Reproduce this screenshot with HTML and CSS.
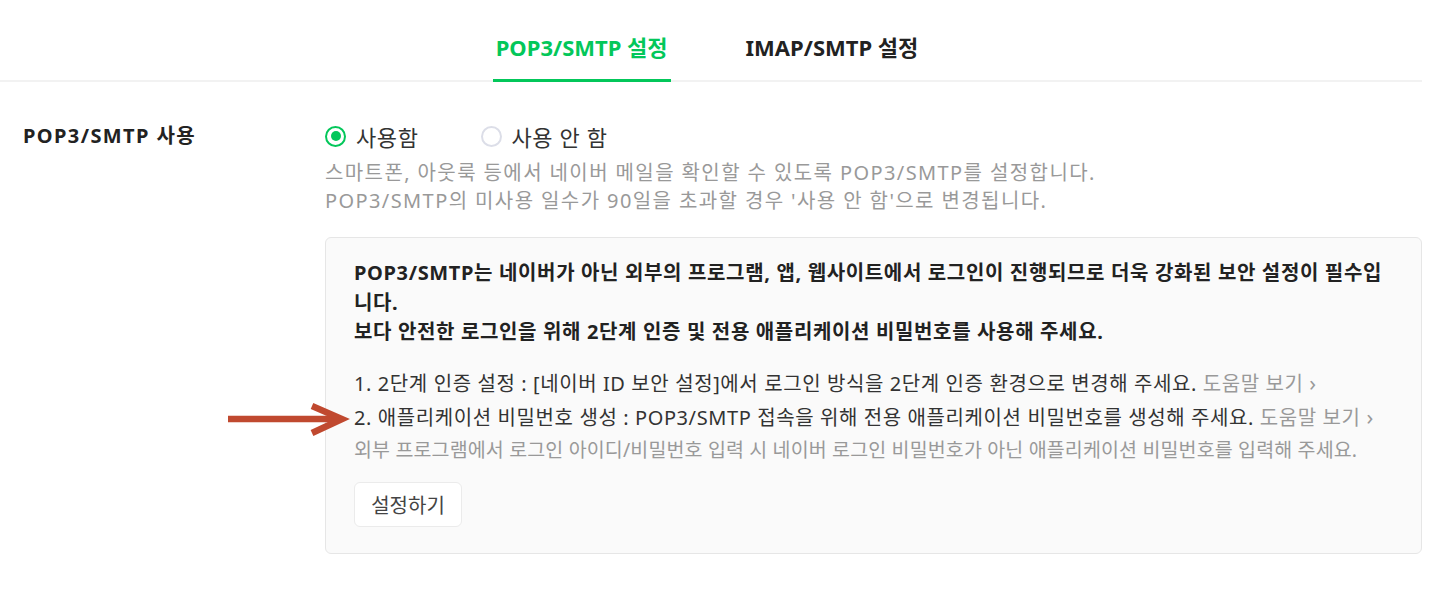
FILE: index.html
```html
<!DOCTYPE html>
<html lang="ko">
<head>
<meta charset="utf-8">
<title>POP3/SMTP 설정</title>
<link rel="stylesheet" href="styles.css">
</head>
<body>
<div class="page">
  <nav class="tabs">
    <a class="tab active">POP3/SMTP 설정</a>
    <a class="tab">IMAP/SMTP 설정</a>
  </nav>
  <section class="row">
    <div class="label">POP3/SMTP 사용</div>
    <div class="content">
      <div class="radios">
        <label class="radio checked"><span class="dot"></span>사용함</label>
        <label class="radio"><span class="dot"></span>사용 안 함</label>
      </div>
      <p class="desc">스마트폰, 아웃룩 등에서 네이버 메일을 확인할 수 있도록 POP3/SMTP를 설정합니다.<br>POP3/SMTP의 미사용 일수가 90일을 초과할 경우 '사용 안 함'으로 변경됩니다.</p>
      <div class="notice">
        <p class="notice-title">POP3/SMTP는 네이버가 아닌 외부의 프로그램, 앱, 웹사이트에서 로그인이 진행되므로 더욱 강화된 보안 설정이 필수입니다.<br>보다 안전한 로그인을 위해 2단계 인증 및 전용 애플리케이션 비밀번호를 사용해 주세요.</p>
        <ol class="steps">
          <li>1. 2단계 인증 설정 : [네이버 ID 보안 설정]에서 로그인 방식을 2단계 인증 환경으로 변경해 주세요. <a class="help">도움말 보기 <span class="chev">›</span></a></li>
          <li class="step2">
            <svg class="arrow" width="122" height="34" viewBox="0 0 122 34"><path d="M0 16h110" stroke="#c0492f" stroke-width="6.5" fill="none"/><path d="M84 3L114 16L84 30" stroke="#c0492f" stroke-width="6.5" fill="none" stroke-linejoin="miter"/></svg>
            2. 애플리케이션 비밀번호 생성 : POP3/SMTP 접속을 위해 전용 애플리케이션 비밀번호를 생성해 주세요. <a class="help">도움말 보기 <span class="chev">›</span></a>
            <div class="sub">외부 프로그램에서 로그인 아이디/비밀번호 입력 시 네이버 로그인 비밀번호가 아닌 애플리케이션 비밀번호를 입력해 주세요.</div>
          </li>
        </ol>
        <button class="btn">설정하기</button>
      </div>
    </div>
  </section>
</div>
</body>
</html>
```
FILE: styles.css
```css
* { box-sizing: border-box; }
body {
  margin: 0;
  background: #fff;
  font-family: "Noto Sans", "Noto Sans CJK KR", sans-serif;
  color: #222;
}
.page {
  width: 1422px;
  position: relative;
}
.tabs {
  display: flex;
  justify-content: center;
  gap: 72px;
  height: 82px;
  border-bottom: 2px solid #f2f2f2;
  padding-right: 8px;
}
.tab {
  display: flex;
  align-items: center;
  height: 82px;
  margin-bottom: -2px;
  padding: 13px 3px 0;
  font-size: 22px;
  font-weight: 700;
  color: #222;
  letter-spacing: 0;
  border-bottom: 3px solid transparent;
}
.tab.active {
  color: #03c75a;
  border-bottom-color: #03c75a;
}
.row {
  display: grid;
  grid-template-columns: 302px 1fr;
  padding: 38px 0 0 23px;
}
.label {
  font-size: 20px;
  font-weight: 700;
  line-height: 32px;
  color: #222;
  letter-spacing: 1.4px;
}
.radios {
  display: flex;
  gap: 62px;
  height: 32px;
  align-items: center;
}
.radio {
  display: flex;
  align-items: center;
  gap: 10px;
  font-size: 22px;
  color: #333;
  letter-spacing: 0.6px;
}
.dot {
  width: 21px;
  height: 21px;
  border-radius: 50%;
  border: 2px solid #dcdee8;
  display: flex;
  align-items: center;
  justify-content: center;
}
.radio.checked .dot { border-color: #03c75a; }
.radio.checked .dot::after {
  content: "";
  width: 10px;
  height: 10px;
  border-radius: 50%;
  background: #03c75a;
}
.desc {
  margin: 7px 0 0;
  font-size: 20px;
  line-height: 28px;
  color: #999;
  letter-spacing: 1.4px;
}
.notice {
  margin-top: 22px;
  border: 1px solid #e6e6e6;
  border-radius: 6px;
  background: #fafafa;
  padding: 20px 28px 26px 28px;
}
.notice-title {
  margin: 0;
  font-size: 20px;
  font-weight: 700;
  line-height: 29.5px;
  color: #222;
  letter-spacing: 0.65px;
}
.steps {
  list-style: none;
  margin: 20px 0 0;
  padding: 0;
  font-size: 20px;
  line-height: 30px;
  color: #333;
  letter-spacing: 0.6px;
}
.steps li + li { margin-top: 2px; }
.step2 { position: relative; }
.arrow {
  position: absolute;
  left: -126px;
  top: 2px;
}
.help { color: #999; }
.chev { font-size: 22px; }
.sub {
  margin-top: 2px;
  color: #999;
  font-size: 19.5px;
  letter-spacing: 0.15px;
}
.btn {
  margin-top: 17px;
  height: 45px;
  width: 108px;
  border: 1px solid #ebebeb;
  border-radius: 6px;
  background: #fff;
  font-family: inherit;
  font-size: 20px;
  color: #444;
}
```
